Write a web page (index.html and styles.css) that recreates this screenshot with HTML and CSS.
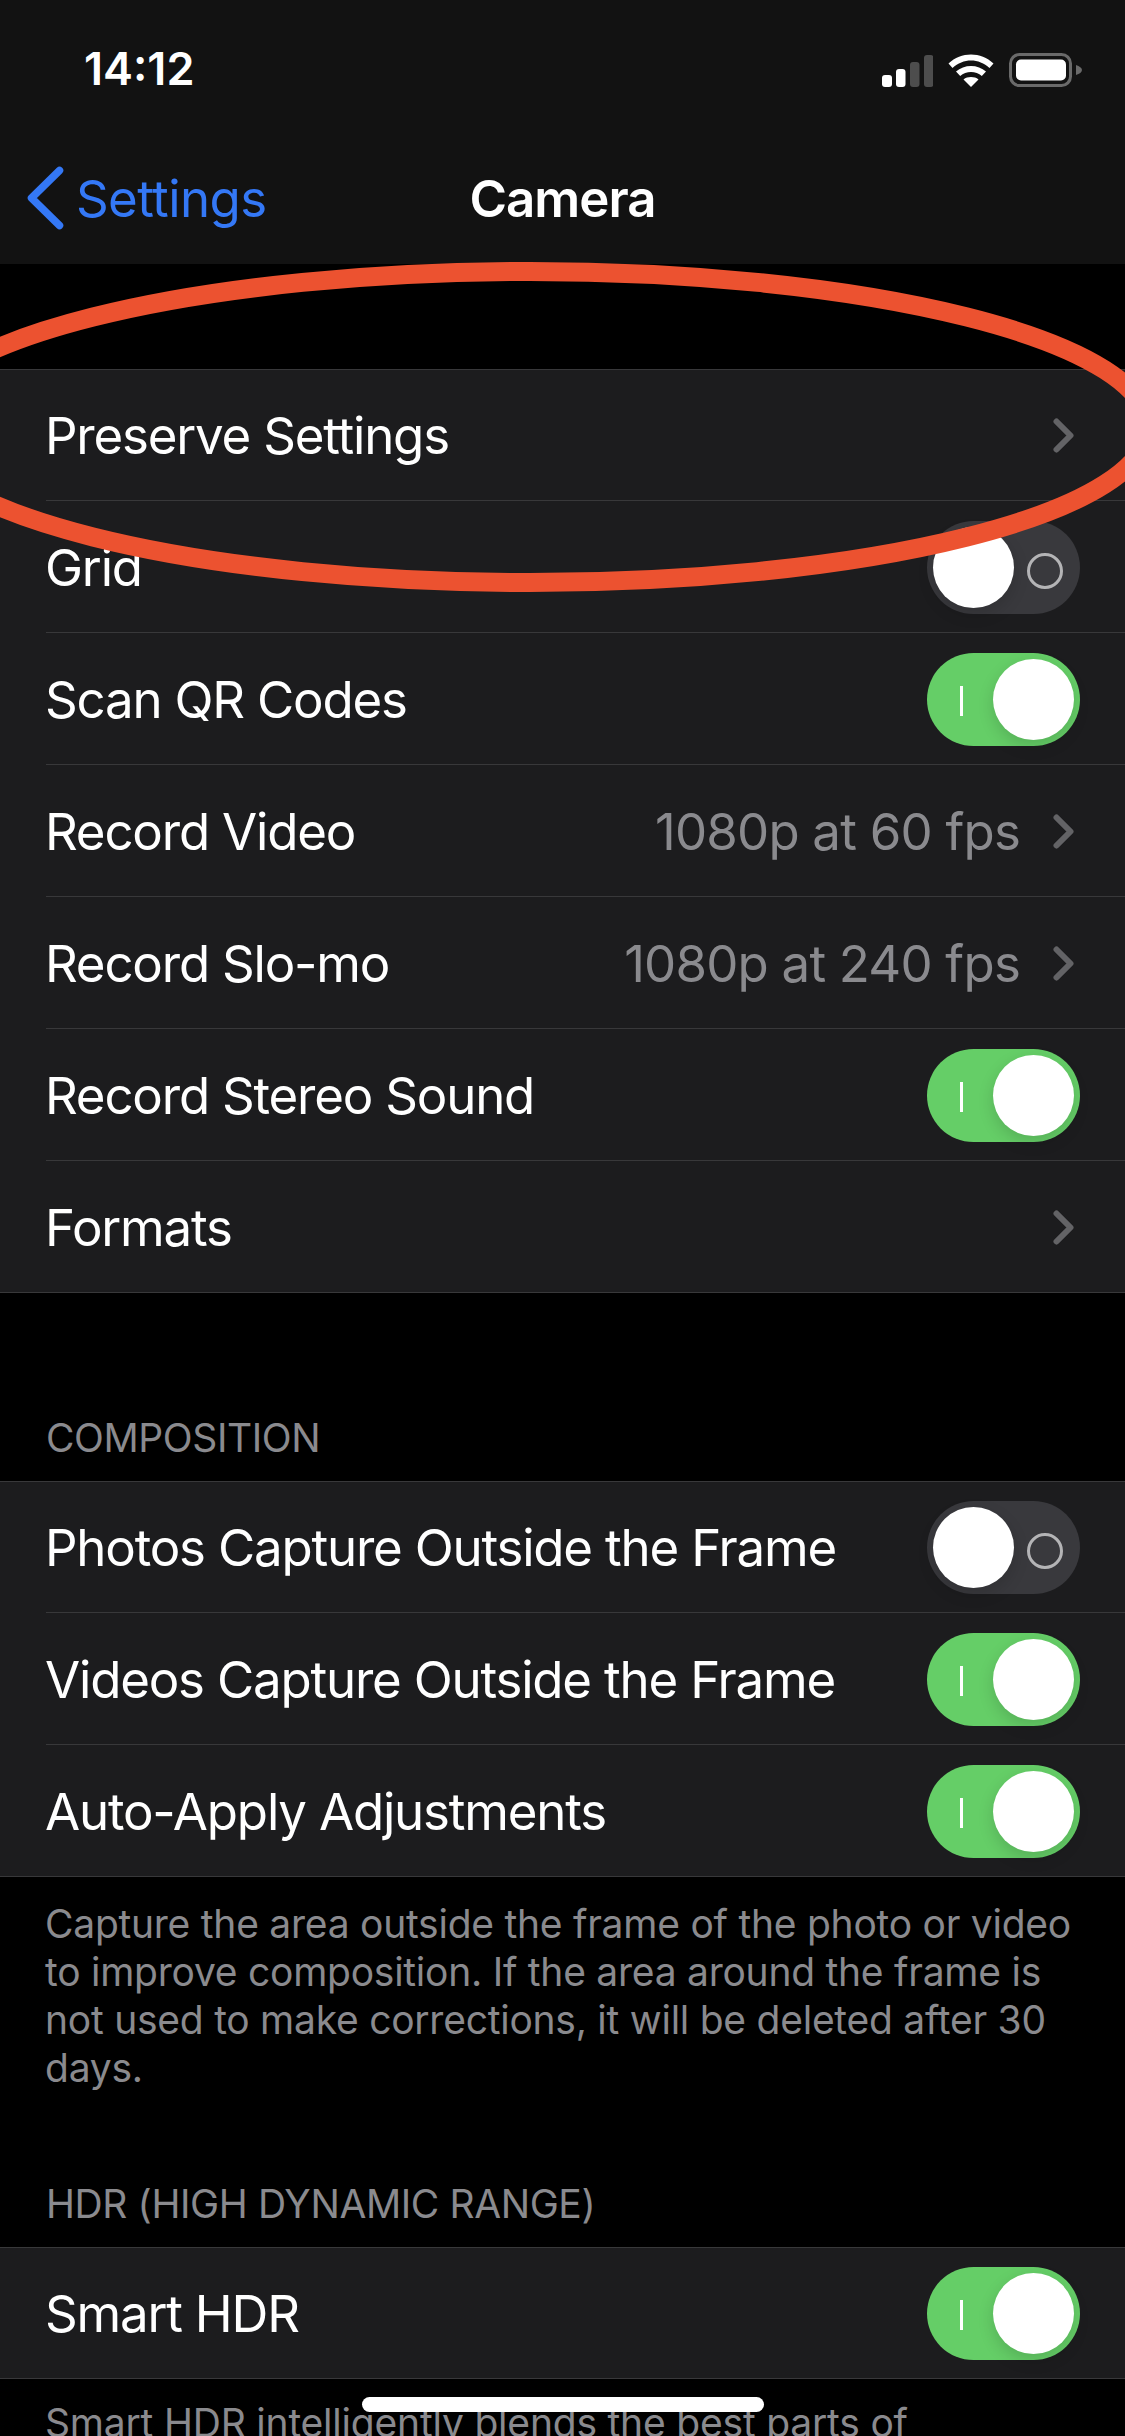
FILE: index.html
```html
<!DOCTYPE html>
<html lang="en">
<head>
<meta charset="utf-8">
<title>Camera</title>
<link rel="stylesheet" href="styles.css">
</head>
<body>
<div class="screen">
  <header class="top">
    <div class="status">
      <span class="time">14:12</span>
      <div class="status-icons">
        <svg class="signal" width="51" height="32" viewBox="0 0 51 32"><rect x="0" y="20" width="10" height="12" rx="3" fill="#fff"/><rect x="14" y="14" width="9.5" height="18" rx="3" fill="#fff"/><rect x="28" y="7" width="9.5" height="25" rx="3" fill="#4d4d4d"/><rect x="42" y="0" width="9.5" height="32" rx="3" fill="#4d4d4d"/></svg>
        <svg class="wifi" width="46" height="33" viewBox="0 0 46 33"><path d="M0.5 9.5C13 -2.5 33 -2.5 45.5 9.5L41.5 14C31 4 15 4 4.5 14Z" fill="#fff"/><path d="M8 17.5C16 10 30 10 38 17.5L33.8 22C28 16.8 18 16.8 12.2 22Z" fill="#fff"/><path d="M15.5 25.5C19.5 22.3 26.5 22.3 30.5 25.5L23 33Z" fill="#fff"/></svg>
        <svg class="battery" width="73" height="34" viewBox="0 0 73 34"><rect x="1.5" y="1.5" width="60" height="31" rx="9" fill="none" stroke="#6a6a6a" stroke-width="3"/><rect x="7" y="6.5" width="50" height="21" rx="5" fill="#fff"/><path d="M67 12C70.5 13 73 15 73 17C73 19 70.5 21 67 22Z" fill="#6a6a6a"/></svg>
      </div>
    </div>
    <nav class="nav">
      <a class="back">
        <svg class="back-icon" width="38" height="64" viewBox="0 0 38 64"><path d="M33.5 4.5L5.5 32L33.5 59.5" fill="none" stroke="#3478f6" stroke-width="7.5" stroke-linecap="round" stroke-linejoin="round"/></svg>
        <span>Settings</span>
      </a>
      <h1 class="title">Camera</h1>
    </nav>
  </header>

  <main class="content">
    <section class="group first">
      <div class="row"><span class="label">Preserve Settings</span><svg class="chev" width="21" height="35" viewBox="0 0 21 35"><path d="M3.5 3.5L17.5 17.5L3.5 31.5" fill="none" stroke="#636366" stroke-width="6" stroke-linecap="round" stroke-linejoin="round"/></svg></div>
      <div class="row"><span class="label">Grid</span><span class="switch off"><i class="thumb"></i></span></div>
      <div class="row"><span class="label">Scan QR Codes</span><span class="switch on"><i class="thumb"></i></span></div>
      <div class="row"><span class="label">Record Video</span><span class="value">1080p at 60 fps</span><svg class="chev" width="21" height="35" viewBox="0 0 21 35"><path d="M3.5 3.5L17.5 17.5L3.5 31.5" fill="none" stroke="#636366" stroke-width="6" stroke-linecap="round" stroke-linejoin="round"/></svg></div>
      <div class="row"><span class="label">Record Slo-mo</span><span class="value">1080p at 240 fps</span><svg class="chev" width="21" height="35" viewBox="0 0 21 35"><path d="M3.5 3.5L17.5 17.5L3.5 31.5" fill="none" stroke="#636366" stroke-width="6" stroke-linecap="round" stroke-linejoin="round"/></svg></div>
      <div class="row"><span class="label">Record Stereo Sound</span><span class="switch on"><i class="thumb"></i></span></div>
      <div class="row"><span class="label">Formats</span><svg class="chev" width="21" height="35" viewBox="0 0 21 35"><path d="M3.5 3.5L17.5 17.5L3.5 31.5" fill="none" stroke="#636366" stroke-width="6" stroke-linecap="round" stroke-linejoin="round"/></svg></div>
    </section>

    <h2 class="section-head composition">COMPOSITION</h2>
    <section class="group">
      <div class="row"><span class="label">Photos Capture Outside the Frame</span><span class="switch off"><i class="thumb"></i></span></div>
      <div class="row"><span class="label">Videos Capture Outside the Frame</span><span class="switch on"><i class="thumb"></i></span></div>
      <div class="row"><span class="label">Auto-Apply Adjustments</span><span class="switch on"><i class="thumb"></i></span></div>
    </section>
    <p class="foot">Capture the area outside the frame of the photo or video to improve composition. If the area around the frame is not used to make corrections, it will be deleted after 30 days.</p>

    <h2 class="section-head hdr">HDR (HIGH DYNAMIC RANGE)</h2>
    <section class="group">
      <div class="row"><span class="label">Smart HDR</span><span class="switch on"><i class="thumb"></i></span></div>
    </section>
    <p class="foot last">Smart HDR intelligently blends the best parts of</p>
  </main>

  <svg class="annotation" width="1125" height="2436" viewBox="0 0 1125 2436"><ellipse cx="530" cy="427" rx="618" ry="155.5" fill="none" stroke="#ec5230" stroke-width="19"/></svg>
  <div class="home"></div>
</div>
</body>
</html>
```
FILE: styles.css
```css
* { box-sizing: border-box; }
html, body { margin: 0; padding: 0; background: #000; }
body { font-family: Inter, "Liberation Sans", sans-serif; color: #fff; }
.screen { position: relative; width: 1125px; height: 2436px; overflow: hidden; background: #000; }

.top { height: 264px; background: #121212; }
.status { height: 132px; padding: 47px 43px 0 84px; display: flex; justify-content: space-between; align-items: flex-start; }
.time { font-size: 45px; line-height: 44px; font-weight: 600; letter-spacing: 0; }
.status-icons { display: flex; align-items: flex-end; padding-top: 6px; }
.signal { margin-right: 15px; }
.wifi { margin-right: 15px; }
.battery { display: block; }

.nav { position: relative; height: 132px; display: flex; align-items: center; justify-content: center; }
.back { position: absolute; left: 26px; top: 34px; display: flex; align-items: center; gap: 12px; color: #3478f6; font-size: 51px; letter-spacing: -0.6px; }
.back-icon { display: block; }
.title { margin: 0; font-size: 51px; font-weight: 600; letter-spacing: -1px; }

.group { background: #1c1c1e; border-top: 1px solid #38383a; }
.group.first { margin-top: 105px; }
.row { position: relative; height: 132px; padding: 0 45px; display: flex; align-items: center; }
.row:first-child { height: 131px; }
.row::after { content: ""; position: absolute; left: 46px; right: 0; bottom: 0; height: 1px; background: #38383a; }
.row:last-child::after { left: 0; }
.label { flex: 1; font-size: 51px; letter-spacing: -1.2px; }
.value { font-size: 51px; color: #8a8a8e; letter-spacing: -0.8px; margin-right: 33px; }
.chev { display: block; margin-right: 6px; }

.switch { position: relative; width: 153px; height: 93px; border-radius: 47px; }
.switch.on { background: #65ce67; }
.switch.off { background: #39393d; }
.switch.on::before { content: ""; position: absolute; left: 33px; top: 33px; width: 3px; height: 30px; background: #fff; }
.switch.off::before { content: ""; position: absolute; left: 100px; top: 32px; width: 30px; height: 30px; border: 3px solid #b4b4b6; border-radius: 50%; }
.thumb { position: absolute; top: 6px; width: 81px; height: 81px; border-radius: 50%; background: #fff; box-shadow: 0 6px 16px rgba(0,0,0,.15); }
.switch.on .thumb { right: 6px; }
.switch.off .thumb { left: 6px; }

.section-head { margin: 0; padding-left: 46px; font-size: 39px; line-height: 44px; font-weight: 400; color: #8a8a8e; letter-spacing: -0.4px; }
.composition { padding-top: 123px; padding-bottom: 21px; }
.hdr { padding-top: 90px; padding-bottom: 21px; }
.foot { margin: 0; padding: 23px 45px 0; font-size: 39px; line-height: 48px; color: #8a8a8e; letter-spacing: -0.25px; }
.foot.last { padding-top: 20px; letter-spacing: -0.2px; }

.annotation { position: absolute; left: 0; top: 0; pointer-events: none; }
.home { position: absolute; left: 362px; top: 2397px; width: 402px; height: 15px; border-radius: 8px; background: #fff; }
```
